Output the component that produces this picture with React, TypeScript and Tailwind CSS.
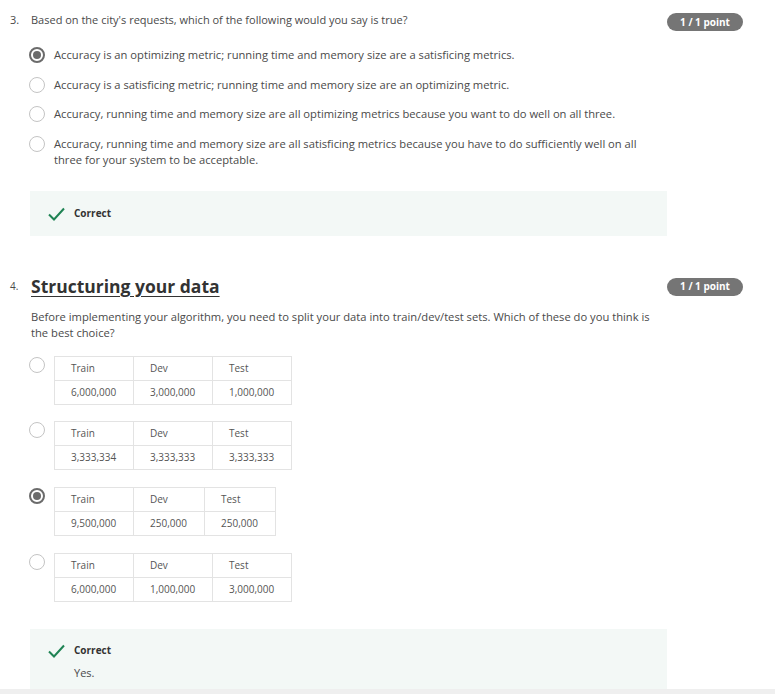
import { ReactNode } from 'react'

interface SplitRow {
  train: string;
  dev: string;
  test: string;
  checked: boolean;
  narrow?: boolean;
}

const q3Options = [
  { text: "Accuracy is an optimizing metric; running time and memory size are a satisficing metrics.", checked: true },
  { text: "Accuracy is a satisficing metric; running time and memory size are an optimizing metric.", checked: false },
  { text: "Accuracy, running time and memory size are all optimizing metrics because you want to do well on all three.", checked: false },
  { text: "Accuracy, running time and memory size are all satisficing metrics because you have to do sufficiently well on all three for your system to be acceptable.", checked: false },
]

const splits: SplitRow[] = [
  { train: "6,000,000", dev: "3,000,000", test: "1,000,000", checked: false },
  { train: "3,333,334", dev: "3,333,333", test: "3,333,333", checked: false },
  { train: "9,500,000", dev: "250,000", test: "250,000", checked: true, narrow: true },
  { train: "6,000,000", dev: "1,000,000", test: "3,000,000", checked: false },
]

function Radio({ checked }: { checked: boolean }) {
  if (checked) {
    return (
      <span className="block w-[16px] h-[16px] rounded-full border-2 border-[#6b6b6b] flex-none flex items-center justify-center">
        <span className="block w-[8px] h-[8px] rounded-full bg-[#6b6b6b]" />
      </span>
    )
  }
  return <span className="block w-[16px] h-[16px] rounded-full border-[1.5px] border-[#c4c4c4] flex-none" />
}

function Badge() {
  return (
    <span className="h-[18px] w-[76px] rounded-full bg-[#757575] text-white text-[10px] font-bold flex items-center justify-center flex-none">
      1 / 1 point
    </span>
  )
}

function Check() {
  return (
    <svg width="17" height="14" viewBox="0 0 17 14" className="flex-none">
      <path d="M1 7.5 L6 12.5 L16 1.5" fill="none" stroke="#1f8354" strokeWidth="2" />
    </svg>
  )
}

function Feedback({ children, className }: { children?: ReactNode; className: string }) {
  return (
    <div className={`bg-[#f3f8f6] pl-[18px] flex ${className}`}>
      <div className="pt-[2px]"><Check /></div>
      <div className="pl-[9px] flex flex-col">
        <span className="text-[10px] font-bold text-[#333] leading-[16px]">Correct</span>
        {children}
      </div>
    </div>
  )
}

function Cell({ children, w }: { children: ReactNode; w: string }) {
  return <div className={`${w} h-[23px] pl-[16px] flex items-center border-[#e3e3e3]`}>{children}</div>
}

function SplitTable({ row }: { row: SplitRow }) {
  const w2 = row.narrow ? "w-[71px]" : "w-[79px]"
  const w3 = row.narrow ? "w-[70px]" : "w-[78px]"
  return (
    <div className="flex gap-[9px]">
      <div className="pt-[1px]"><Radio checked={row.checked} /></div>
      <div className="border border-[#e3e3e3] text-[10px] text-[#555] flex flex-col">
        <div className="flex border-b border-[#e3e3e3]">
          <Cell w="w-[79px] border-r">Train</Cell>
          <Cell w={`${w2} border-r`}>Dev</Cell>
          <Cell w={w3}>Test</Cell>
        </div>
        <div className="flex">
          <Cell w="w-[79px] border-r">{row.train}</Cell>
          <Cell w={`${w2} border-r`}>{row.dev}</Cell>
          <Cell w={w3}>{row.test}</Cell>
        </div>
      </div>
    </div>
  )
}

export default function App() {
  return (
    <div className="w-[775px] h-[694px] bg-white overflow-hidden flex flex-col text-[#4a4a4a]" style={{ fontFamily: '"Open Sans", sans-serif' }}>
      <div className="flex-1 px-[10px]">
        {/* question 3 */}
        <section className="flex pt-[12px]">
          <span className="w-[21px] text-[11px] leading-[16px]">3.</span>
          <div className="w-[636px] flex flex-col">
            <p className="text-[11px] leading-[16px]">Based on the city's requests, which of the following would you say is true?</p>
            <div className="flex flex-col gap-[13.6px] mt-[19px] -ml-[2px]">
              {q3Options.map((o, i) => (
                <label key={i} className="flex gap-[9px]">
                  <Radio checked={o.checked} />
                  <span className="text-[11.2px] leading-[16px] w-[590px]">{o.text}</span>
                </label>
              ))}
            </div>
            <Feedback className="h-[45px] mt-[23px] pt-[14px] -ml-[1px]" />
          </div>
          <div className="pt-[1px]"><Badge /></div>
        </section>

        {/* question 4 */}
        <section className="flex pt-[39px]">
          <span className="w-[21px] text-[10px] leading-[16px] pt-[3px]">4.</span>
          <div className="w-[636px] flex flex-col">
            <h2 className="text-[17.5px] font-bold text-[#333] leading-[22px] underline underline-offset-[3px]">Structuring your data</h2>
            <p className="text-[11.2px] leading-[16px] mt-[12px] w-[625px]">
              Before implementing your algorithm, you need to split your data into train/dev/test sets. Which of these do you think is the best choice?
            </p>
            <div className="flex flex-col gap-[16.7px] mt-[15px] -ml-[2px]">
              {splits.map((s, i) => (
                <SplitTable key={i} row={s} />
              ))}
            </div>
            <Feedback className="h-[60px] mt-[27px] pt-[13px] -ml-[1px]">
              <span className="text-[11px] leading-[16px] mt-[7px]">Yes.</span>
            </Feedback>
          </div>
          <div className="pt-[3px]"><Badge /></div>
        </section>
      </div>
      <div className="h-[6px] bg-[#efefef]" />
    </div>
  )
}
